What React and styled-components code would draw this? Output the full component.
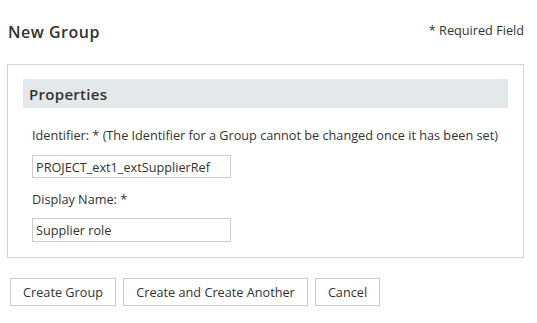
import React from 'react';
import styled, { createGlobalStyle } from 'styled-components';

const GlobalStyle = createGlobalStyle`
  body {
    margin: 0;
    background: #fff;
    font-family: 'Open Sans', 'Liberation Sans', sans-serif;
    color: #333;
  }
`;

const Page = styled.div`
  width: 517px;
  padding: 0 0 0 7px;
`;

const Header = styled.div`
  display: flex;
  justify-content: space-between;
  align-items: center;
  height: 64px;
  padding-left: 1px;
`;

const Title = styled.h1`
  margin: 0;
  font-size: 16px;
  font-weight: 600;
  letter-spacing: 0.5px;
  color: #333;
`;

const Required = styled.span`
  font-size: 12.7px;
  color: #333;
  margin-top: -4px;
`;

const Panel = styled.div`
  border: 1px solid #d4d4d4;
  padding: 14px 15px 15px;
`;

const SectionHead = styled.div`
  background: #e3e9eb;
  height: 29px;
  display: flex;
  align-items: center;
  padding-left: 6px;
  font-size: 15px;
  font-weight: 600;
  letter-spacing: 0.3px;
  color: #333;
`;

const Fields = styled.div`
  display: flex;
  flex-direction: column;
  padding: 18px 9px 0;
`;

const Label = styled.label`
  font-size: 12.7px;
  line-height: 18px;
  white-space: nowrap;
  color: #333;
  margin-bottom: ${(p) => p.$gap || 10}px;
`;

const Input = styled.input`
  box-sizing: border-box;
  width: 199px;
  height: ${(p) => p.$h || 23}px;
  border: 1px solid #ccc;
  padding: 0 3px;
  font-family: inherit;
  font-size: 12.7px;
  color: #333;
  margin-bottom: ${(p) => p.$mb || 0}px;
  outline: none;
`;

const Actions = styled.div`
  display: flex;
  gap: 7px;
  margin-top: 20px;
  padding-left: 3px;
`;

const Button = styled.button`
  height: 28px;
  padding: 0;
  background: #fff;
  border: 1px solid #ccc;
  font-family: inherit;
  font-size: 12.7px;
  color: #333;
  white-space: nowrap;
  width: ${(p) => p.$w}px;
`;

export default function App() {
  return (
    <>
      <GlobalStyle />
      <Page>
        <Header>
          <Title>New Group</Title>
          <Required>* Required Field</Required>
        </Header>
        <Panel>
          <SectionHead>Properties</SectionHead>
          <Fields>
            <Label $gap={11}>
              Identifier: * (The Identifier for a Group cannot be changed once it has been set)
            </Label>
            <Input $mb={12} defaultValue="PROJECT_ext1_extSupplierRef" />
            <Label $gap={10}>Display Name: *</Label>
            <Input $h={24} defaultValue="Supplier role" />
          </Fields>
        </Panel>
        <Actions>
          <Button $w={106}>Create Group</Button>
          <Button $w={185}>Create and Create Another</Button>
          <Button $w={65}>Cancel</Button>
        </Actions>
      </Page>
    </>
  );
}
